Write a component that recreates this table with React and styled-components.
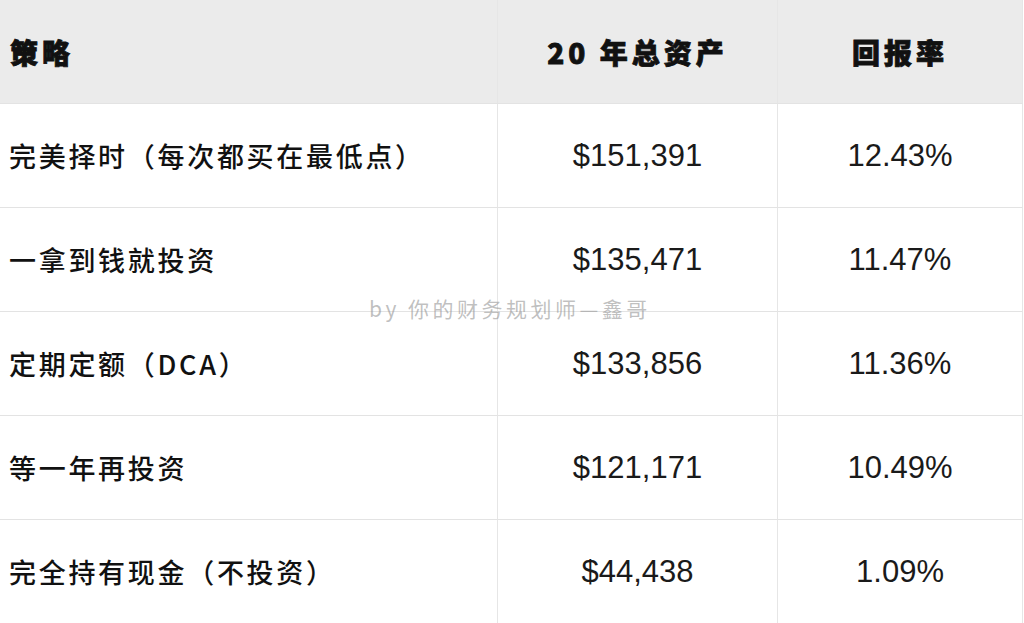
import React from "react";
import styled, { createGlobalStyle } from "styled-components";

const rows = [
  { name: "完美择时（每次都买在最低点）", total: "$151,391", rate: "12.43%" },
  { name: "一拿到钱就投资", total: "$135,471", rate: "11.47%" },
  { name: "定期定额（DCA）", total: "$133,856", rate: "11.36%" },
  { name: "等一年再投资", total: "$121,171", rate: "10.49%" },
  { name: "完全持有现金（不投资）", total: "$44,438", rate: "1.09%" },
];

const App = () => {
  return (
    <>
      <GlobalStyle />
      <Page>
        <Table>
          <HeadCell>策略</HeadCell>
          <HeadCell center>20 年总资产</HeadCell>
          <HeadCell center>回报率</HeadCell>
          {rows.map((row, index) => (
            <React.Fragment key={index}>
              <NameCell>{row.name}</NameCell>
              <NumCell>{row.total}</NumCell>
              <NumCell>{row.rate}</NumCell>
            </React.Fragment>
          ))}
        </Table>
        <Watermark>by 你的财务规划师—鑫哥</Watermark>
      </Page>
    </>
  );
};

export default App;

const GlobalStyle = createGlobalStyle`
  body {
    margin: 0;
    background: #ffffff;
    font-family: "Noto Sans CJK SC", "Liberation Sans", sans-serif;
  }
`;

const Page = styled.div`
  position: relative;
  width: 1024px;
  height: 623px;
  overflow: hidden;
  background: #ffffff;
`;

const Table = styled.div`
  display: grid;
  width: 1023px;
  grid-template-columns: 498px 280px 1fr;
  grid-auto-rows: 104px;
`;

const Cell = styled.div`
  display: flex;
  align-items: center;
  box-sizing: border-box;
  border-bottom: 1px solid #e3e3e3;
  border-right: 1px solid #e6e6e6;
  color: #111111;
`;

const HeadCell = styled(Cell)`
  background: #ebebeb;
  justify-content: ${(props) => (props.center ? "center" : "flex-start")};
  padding-left: ${(props) => (props.center ? "0" : "10px")};
  font-family: "Noto Sans CJK SC", sans-serif;
  font-weight: 900;
  font-size: 28px;
  letter-spacing: 4px;
  -webkit-text-stroke: 0.8px #111111;
`;

const NameCell = styled(Cell)`
  padding-left: 9px;
  font-family: "Noto Sans CJK SC", sans-serif;
  font-weight: 500;
  font-size: 27px;
  letter-spacing: 2.7px;
`;

const NumCell = styled(Cell)`
  justify-content: center;
  font-family: "Liberation Sans", Arial, sans-serif;
  font-size: 31px;
  color: #1a1a1a;
`;

const Watermark = styled.div`
  position: absolute;
  left: 369px;
  top: 293px;
  color: rgba(150, 150, 150, 0.6);
  font-family: "Noto Sans CJK SC", sans-serif;
  font-size: 21px;
  letter-spacing: 3.5px;
  white-space: nowrap;
  pointer-events: none;
`;
